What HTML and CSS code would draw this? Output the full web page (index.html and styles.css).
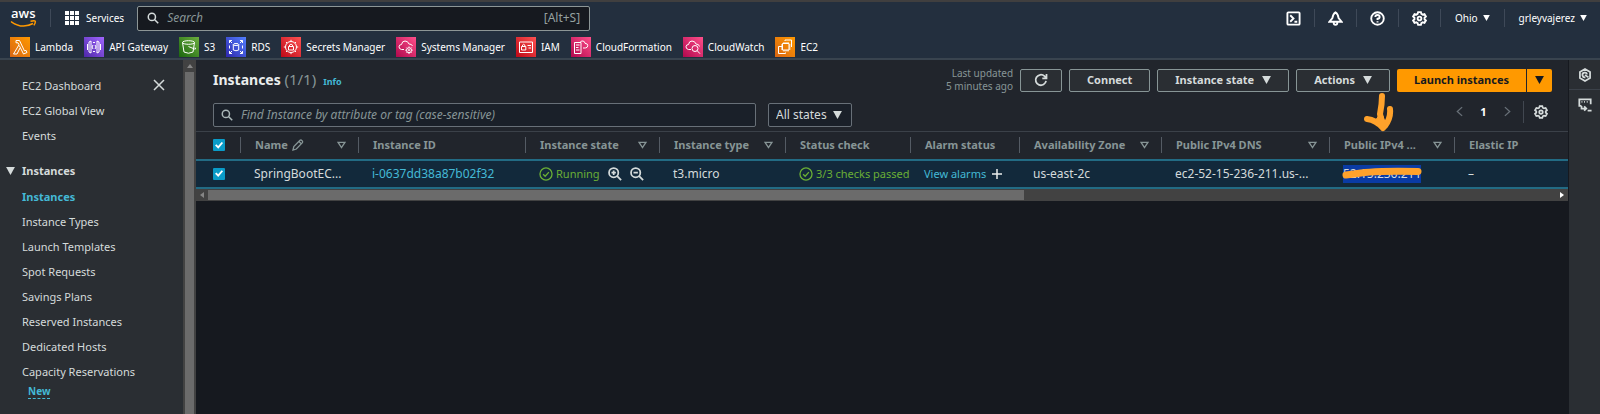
FILE: index.html
```html
<!DOCTYPE html>
<html lang="en">
<head>
<meta charset="utf-8">
<title>Instances | EC2</title>
<link rel="stylesheet" href="styles.css">
</head>
<body>
<svg class="defs" aria-hidden="true">
  <defs>
    <linearGradient id="g-orange" x1="0" y1="1" x2="1" y2="0"><stop offset="0" stop-color="#d86613"/><stop offset="1" stop-color="#f90"/></linearGradient>
    <linearGradient id="g-purple" x1="0" y1="1" x2="1" y2="0"><stop offset="0" stop-color="#4d27a8"/><stop offset="1" stop-color="#a166ff"/></linearGradient>
    <linearGradient id="g-green" x1="0" y1="1" x2="1" y2="0"><stop offset="0" stop-color="#1b660f"/><stop offset="1" stop-color="#6cae3e"/></linearGradient>
    <linearGradient id="g-blue" x1="0" y1="1" x2="1" y2="0"><stop offset="0" stop-color="#2e27ad"/><stop offset="1" stop-color="#527fff"/></linearGradient>
    <linearGradient id="g-red" x1="0" y1="1" x2="1" y2="0"><stop offset="0" stop-color="#bd0816"/><stop offset="1" stop-color="#ff5252"/></linearGradient>
    <linearGradient id="g-pink" x1="0" y1="1" x2="1" y2="0"><stop offset="0" stop-color="#b0084d"/><stop offset="1" stop-color="#ff4f8b"/></linearGradient>
    <symbol id="i-search" viewBox="0 0 16 16"><circle cx="6.5" cy="6.5" r="4.8"/><path d="M10 10l5 5"/></symbol>
    <symbol id="i-gear" viewBox="0 0 16 16"><path d="M6.500 1.200h3l.5 1.900 1.400.8 1.900-.5 1.500 2.500L13.400 7.200v1.600l1.400 1.300-1.500 2.500-1.900-.5-1.400.8-.5 1.900h-3L6 12.900l-1.400-.8-1.900.5-1.500-2.500L2.600 8.800V7.200L1.200 5.900l1.500-2.500 1.900.5L6 3.100z"/><circle cx="8" cy="8" r="2"/></symbol>
    <symbol id="i-down" viewBox="0 0 10 9"><path d="M0 0h10L5 9z"/></symbol>
    <symbol id="i-sort" viewBox="0 0 10 8"><path d="M1.200 1h7.600L5 6.800z"/></symbol>
    <symbol id="i-ok" viewBox="0 0 16 16"><circle cx="8" cy="8" r="6.900"/><path d="M4.700 8.200l2.400 2.300 4.200-4.600"/></symbol>
  </defs>
</svg>

<header class="topnav">
  <div class="nav-row">
    <a class="logo" href="#" aria-label="AWS home">
      <span class="logo-text">aws</span>
      <svg class="smile" viewBox="0 0 27 8"><path d="M1 1.500Q12 9.500 23 3.500" /><path d="M20.500 1.200q4.500-1 4.800.2.300 1.500-1.400 4"/></svg>
    </a>
    <button class="services" type="button">
      <svg class="grid-icon" viewBox="0 0 14 14"><path d="M0 0h4v4H0zM5 0h4v4H5zM10 0h4v4h-4zM0 5h4v4H0zM5 5h4v4H5zM10 5h4v4h-4zM0 10h4v4H0zM5 10h4v4H5zM10 10h4v4h-4z"/></svg>
      Services
    </button>
    <label class="search">
      <svg class="ic light"><use href="#i-search"/></svg>
      <input type="search" placeholder="Search" aria-label="Search">
      <span class="hint">[Alt+S]</span>
    </label>
    <div class="nav-tools">
      <button class="tool" type="button" aria-label="CloudShell"><svg class="ic" viewBox="0 0 16 16"><rect x="1.500" y="1.500" width="13" height="13" rx="1"/><path d="M4.500 4.500L8 8l-3.500 3.500M9 11.500h3"/></svg></button>
      <button class="tool" type="button" aria-label="Notifications"><svg class="ic" viewBox="0 0 16 16"><path d="M8 1.500c-2.500 1.500-3 4-3.300 6L1.500 11.500h13L11.300 7.500C11 5.500 10.500 3 8 1.500zM6 12q0 2.800 2 2.800T10 12"/></svg></button>
      <button class="tool" type="button" aria-label="Help"><svg class="ic" viewBox="0 0 16 16"><circle cx="8" cy="8" r="6.700"/><path d="M5.700 6.500q0-2.300 2.300-2.300t2.300 2.100Q10.300 8 8 8.300v1.200M8 10.800v1.500"/></svg></button>
      <button class="tool" type="button" aria-label="Settings"><svg class="ic"><use href="#i-gear"/></svg></button>
      <button type="button">Ohio <svg class="caret"><use href="#i-down"/></svg></button>
      <button type="button">grleyvajerez <svg class="caret"><use href="#i-down"/></svg></button>
    </div>
  </div>
  <nav class="favorites" aria-label="Favorites">
    <a href="#"><svg viewBox="0 0 20 20"><rect fill="url(#g-orange)" width="20" height="20"/><path d="M6 3.500h3.500l5 10.500 1.500-.7 1 2.200-3.500 1.500L9.300 8.500M6 3.500v2.300h2l1 2L3.500 17H7l3-6"/></svg>Lambda</a>
    <a href="#"><svg viewBox="0 0 20 20"><rect fill="url(#g-purple)" width="20" height="20"/><path d="M7 4L5 5v10l2 1zM13 4l2 1v10l-2 1zM3.500 7v6M16.500 7v6M9 8l-1 2 1 2M11 8l1 2-1 2M9 5.500h2M9 14.500h2"/></svg>API Gateway</a>
    <a href="#"><svg viewBox="0 0 20 20"><rect fill="url(#g-green)" width="20" height="20"/><ellipse cx="9.500" cy="5.500" rx="6" ry="1.800"/><path d="M3.500 5.500L5 15q4.500 2.500 9 0l1.500-9.500M9.500 9.500l6 2.500q2 .5.500-1.500"/></svg>S3</a>
    <a href="#"><svg viewBox="0 0 20 20"><rect fill="url(#g-blue)" width="20" height="20"/><ellipse cx="10" cy="7.500" rx="2.700" ry="1"/><path d="M7.300 7.500v5.500q2.700 1.500 5.400 0V7.500M3.500 6V3.500H6M3.500 3.500L6 6M14 3.500h2.500V6M16.500 3.500L14 6M3.500 14v2.500H6M3.500 16.500L6 14M14 16.500h2.500V14M16.500 16.500L14 14M3.500 8.500v3M16.500 8.500v3"/></svg>RDS</a>
    <a href="#"><svg viewBox="0 0 20 20"><rect fill="url(#g-red)" width="20" height="20"/><circle cx="10" cy="10" r="5.500"/><path d="M7.500 9.500h5v3.500h-5zM8.500 9.500V8q1.500-1.800 3 0v1.500M10 2.800v1.700M10 15.500v1.700M2.800 10h1.700M15.500 10h1.700M5 5l1 1M15 5l-1 1M5 15l1-1M15 15l-1-1"/></svg>Secrets Manager</a>
    <a href="#"><svg viewBox="0 0 20 20"><rect fill="url(#g-pink)" width="20" height="20"/><path d="M8 12.500H5.500Q3 12 3 9.800T5.500 7.500Q6 4 9 4t4 3q3 0 3.500 2"/><circle cx="13" cy="13.200" r="2.500"/><circle cx="13" cy="13.200" r=".7"/><path d="M13 9.500v1M13 16v1M9.300 13.200h1M15.700 13.200h1M10.400 10.600l.7.700M15 15.200l.7.700M10.400 15.900l.7-.7M15 11.200l.7-.7"/></svg>Systems Manager</a>
    <a href="#"><svg viewBox="0 0 20 20"><rect fill="url(#g-red)" width="20" height="20"/><path d="M3.500 5h13v10.500h-13zM5.500 9.500h4.300V13H5.500zM6.500 9.500V8q1.200-1.500 2.300 0v1.500M11.500 8.500H15M12.500 11H15"/></svg>IAM</a>
    <a href="#"><svg viewBox="0 0 20 20"><rect fill="url(#g-pink)" width="20" height="20"/><path d="M3.500 5.500h6.500v11H3.500zM5 8h3.500M5 10.500h2.500M5 13h3.500M9 5.500Q10 3.500 12 4t2 2.300q3 .2 2.800 2.500-.3 2-2.500 2.200H12"/></svg>CloudFormation</a>
    <a href="#"><svg viewBox="0 0 20 20"><rect fill="url(#g-pink)" width="20" height="20"/><path d="M8 12.500H5.500Q3 12 3 9.800T5.500 7.500Q6 4 9 4t4 3q3 0 3.500 2.500"/><circle cx="12" cy="11.500" r="3"/><path d="M14.200 13.700l2.800 3"/></svg>CloudWatch</a>
    <a href="#"><svg viewBox="0 0 20 20"><rect fill="url(#g-orange)" width="20" height="20"/><path d="M7.500 6.500h6.500v6.500H7.500zM9 6.500V5M11 6.500V5M13 6.500V5M9 14.500V13M11 14.500V13M13 14.500V13M7.500 8H6M7.500 10H6M7.500 12H6M15.500 8H14M15.500 10H14M15.500 12H14M10 4V3h6.500v7M7 9.500H3.500v7h7V15.500"/></svg>EC2</a>
  </nav>
</header>

<div class="layout">
  <aside class="sidebar">
    <nav class="side-nav" aria-label="EC2">
      <button class="close" type="button" aria-label="Close navigation"><svg viewBox="0 0 12 12"><path d="M1 1l10 10M11 1L1 11"/></svg></button>
      <ul>
        <li><a href="#">EC2 Dashboard</a></li>
        <li><a href="#">EC2 Global View</a></li>
        <li><a href="#">Events</a></li>
      </ul>
      <button class="group" type="button"><svg class="tri"><use href="#i-down"/></svg>Instances</button>
      <ul>
        <li><a class="active" href="#">Instances</a></li>
        <li><a href="#">Instance Types</a></li>
        <li><a href="#">Launch Templates</a></li>
        <li><a href="#">Spot Requests</a></li>
        <li><a href="#">Savings Plans</a></li>
        <li><a href="#">Reserved Instances</a></li>
        <li><a href="#">Dedicated Hosts</a></li>
        <li><a href="#">Capacity Reservations</a></li>
      </ul>
      <a class="new" href="#">New</a>
    </nav>
    <div class="vscroll"><svg viewBox="0 0 6 4"><path d="M0 4h6L3 0z"/></svg><div class="vthumb"></div></div>
  </aside>

  <main class="content">
    <section class="panel">
      <div class="title-row">
        <h1>Instances <span>(1/1)</span></h1>
        <a class="info" href="#">Info</a>
        <div class="actions">
          <p class="updated">Last updated<br>5 minutes ago</p>
          <button class="btn icon-btn" type="button" aria-label="Refresh"><svg class="ic" viewBox="0 0 16 16"><path d="M13.800 9A6 6 0 1 1 12 3.600L14 5.500M14.300 1v5H9.500"/></svg></button>
          <button class="btn" type="button">Connect</button>
          <button class="btn" type="button">Instance state <svg class="drop"><use href="#i-down"/></svg></button>
          <div class="action-anchor">
            <button class="btn" type="button">Actions <svg class="drop"><use href="#i-down"/></svg></button>
            <svg class="arrow-note" viewBox="0 0 30 42" aria-hidden="true"><path d="M18 4Q18 12 16 22L19 36M19 36Q12 28 3 27M26 17Q27 26 21 34"/><path class="fill" d="M16 22L11 29 18 38 22 33 19 24z"/></svg>
          </div>
          <div class="split">
            <button class="primary" type="button">Launch instances</button>
            <button class="primary more" type="button" aria-label="More launch options"><svg class="drop"><use href="#i-down"/></svg></button>
          </div>
        </div>
      </div>
      <div class="filter-row">
        <label class="filter">
          <svg class="ic"><use href="#i-search"/></svg>
          <input type="text" placeholder="Find Instance by attribute or tag (case-sensitive)" aria-label="Find Instance">
        </label>
        <div class="select-wrap">
          <select aria-label="Instance states"><option>All states</option></select>
          <svg class="drop"><use href="#i-down"/></svg>
        </div>
        <div class="pager">
          <button type="button" aria-label="Previous page"><svg class="chev" viewBox="0 0 8 12"><path d="M7 1L1.500 6 7 11"/></svg></button>
          <button class="page" type="button">1</button>
          <button type="button" aria-label="Next page"><svg class="chev" viewBox="0 0 8 12"><path d="M1 1l5.500 5L1 11"/></svg></button>
          <button class="prefs" type="button" aria-label="Preferences"><svg class="ic"><use href="#i-gear"/></svg></button>
        </div>
      </div>
      <table>
        <colgroup><col class="c-check"><col class="c-name"><col class="c-id"><col class="c-state"><col class="c-type"><col class="c-status"><col class="c-alarm"><col class="c-zone"><col class="c-dns"><col class="c-ip"><col></colgroup>
        <thead>
          <tr>
            <th><input type="checkbox" checked aria-label="Select all"></th>
            <th><div>Name <svg class="pencil" viewBox="0 0 12 12"><path d="M1 11l.8-3.500L8 1.300q1-.7 2 .3t.4 2L4.300 10zM7 2.500L9.500 5"/></svg><svg class="sort"><use href="#i-sort"/></svg></div></th>
            <th><div>Instance ID</div></th>
            <th><div>Instance state<svg class="sort"><use href="#i-sort"/></svg></div></th>
            <th><div>Instance type<svg class="sort"><use href="#i-sort"/></svg></div></th>
            <th><div>Status check</div></th>
            <th><div>Alarm status</div></th>
            <th><div>Availability Zone<svg class="sort"><use href="#i-sort"/></svg></div></th>
            <th><div>Public IPv4 DNS<svg class="sort"><use href="#i-sort"/></svg></div></th>
            <th><div>Public IPv4 ...<svg class="sort"><use href="#i-sort"/></svg></div></th>
            <th><div>Elastic IP</div></th>
          </tr>
        </thead>
        <tbody>
          <tr>
            <td><input type="checkbox" checked aria-label="Select SpringBootEC"></td>
            <td>SpringBootEC...</td>
            <td><a href="#">i-0637dd38a87b02f32</a></td>
            <td><div class="state"><svg class="ok"><use href="#i-ok"/></svg><span>Running</span>
              <button type="button" aria-label="Filter by value"><svg class="ic" viewBox="0 0 16 16"><circle cx="6.500" cy="6.500" r="5.300"/><path d="M10.500 10.500L15 15M4 6.500h5M6.500 4v5"/></svg></button>
              <button type="button" aria-label="Exclude value"><svg class="ic" viewBox="0 0 16 16"><circle cx="6.500" cy="6.500" r="5.300"/><path d="M10.500 10.500L15 15M4 6.500h5"/></svg></button></div></td>
            <td>t3.micro</td>
            <td><div class="state"><svg class="ok"><use href="#i-ok"/></svg><span>3/3 checks passed</span></div></td>
            <td><div class="alarm"><a href="#">View alarms</a><button type="button" aria-label="Add alarm"><svg viewBox="0 0 10 10"><path d="M5 0v10M0 5h10"/></svg></button></div></td>
            <td>us-east-2c</td>
            <td>ec2-52-15-236-211.us-...</td>
            <td><span class="marked">52.15.236.211<svg viewBox="0 0 80 12" aria-hidden="true"><path d="M4 8Q12 7 19 6T40 4.500 76 4.500"/></svg></span></td>
            <td>–</td>
          </tr>
        </tbody>
      </table>
      <div class="hscroll"><svg viewBox="0 0 4 6"><path d="M4 0v6L0 3z"/></svg><div class="htrack"><div class="hthumb"></div></div><svg class="on" viewBox="0 0 4 6"><path d="M0 0v6l4-3z"/></svg></div>
    </section>
  </main>

  <aside class="rail">
    <button type="button" aria-label="Info panel"><svg class="ic" viewBox="0 0 16 16"><path d="M8 1.200l5.800 3.300v7L8 14.800l-5.800-3.300v-7zM8 8l4 2.700"/><path d="M10.400 7.300a2.700 2.700 0 1 0-2 3.300"/></svg></button>
    <button type="button" aria-label="Command panel"><svg class="ic" viewBox="0 0 16 16"><path d="M4 9H1.500V1.500h13V7M4 4.300h1M7 4.300h1M10 4.300h1M4 9v3h5M7 9.500l2.500 2.500L7 14.500M11 14.500h4.500"/></svg></button>
  </aside>
</div>
</body>
</html>
```

FILE: styles.css
```css
* { box-sizing: border-box; }

body {
  margin: 0;
  min-height: 100vh;
  display: flex;
  flex-direction: column;
  background: #16191f;
  color: #d5dbdb;
  font-family: "Noto Sans", "Open Sans", sans-serif;
  font-size: 11px;
  line-height: 16px;
}

button, input, select { font: inherit; color: inherit; background: none; border: 0; padding: 0; margin: 0; }
button { display: inline-flex; align-items: center; justify-content: center; }
a { color: #44b9d6; text-decoration: none; }
ul { list-style: none; margin: 0; padding: 0; }
svg { display: block; flex: none; }
.defs { position: absolute; width: 0; height: 0; }

.ic { width: 14px; height: 14px; fill: none; stroke: currentColor; stroke-width: 2; }

/* Top navigation */
.topnav { background: #232f3e; border-top: 2px solid #403f3f; border-bottom: 2px solid #39444f; }
.nav-row { display: flex; align-items: center; height: 32px; color: #fff; font-size: 10px; }
.logo { width: 51px; height: 18px; padding-left: 10px; border-right: 1px solid #3e4958; color: #fff; }
.logo-text { display: block; height: 11px; padding-left: 1px; font: 600 13px/9px "Open Sans", sans-serif; }
.smile { width: 27px; height: 8px; fill: none; stroke: #f90; stroke-width: 1.5; }
.services { gap: 7px; padding: 0 13px 0 14px; }
.grid-icon { width: 14px; height: 14px; fill: #fff; }
.search { display: flex; align-items: center; gap: 8px; width: 453px; height: 25px; padding: 0 9px; background: #16191f; border: 1px solid #8d9696; border-radius: 2px; font-size: 12px; color: #95a0a0; }
.search .light { color: #d5dbdb; width: 12px; height: 12px; }
.search input { flex: 1; outline: 0; }
::placeholder { color: #879596; font-style: italic; opacity: 1; }
.nav-tools { display: flex; margin-left: auto; }
.nav-tools button { gap: 5px; height: 18px; padding: 0 14px; border-left: 1px solid #3e4958; }
.nav-tools .tool { padding: 0 13px; }
.nav-tools .ic { width: 15px; height: 15px; }
.nav-tools button:first-child { border-left: 0; }
.nav-tools button:last-child { padding-right: 13px; }
.caret { width: 7px; height: 6px; fill: #fff; }

.favorites { display: flex; gap: 11px; height: 24px; padding: 3px 10px 0; }
.favorites a { display: flex; align-items: center; gap: 5px; height: 20px; color: #fff; font-size: 10px; }
.favorites svg { width: 20px; height: 20px; }
.favorites path, .favorites circle, .favorites ellipse { fill: none; stroke: #fff; stroke-width: 1; }

/* Page frame */
.layout { flex: 1; display: flex; }
.sidebar { display: flex; width: 196px; background: #2a2e33; }
.side-nav { flex: 1; position: relative; padding: 13px 0 0; font-size: 11px; }
.side-nav li { height: 25px; padding-left: 22px; line-height: 25px; }
.side-nav li a { color: #d5dbdb; }
.side-nav li a.active { color: #44b9d6; font-weight: bold; }
.side-nav .close { position: absolute; right: 18px; top: 19px; }
.close svg { width: 12px; height: 12px; stroke: #d5dbdb; stroke-width: 1.5; }
.side-nav .group { height: 16px; margin: 15px 0 5px; padding-left: 6px; gap: 7px; font-weight: bold; }
.tri { width: 9px; height: 8px; fill: #d5dbdb; }
.new { display: block; width: fit-content; margin-left: 28px; font-size: 10px; font-weight: bold; line-height: 14px; border-bottom: 1px dashed #44b9d6; }
.vscroll { width: 13px; display: flex; flex-direction: column; align-items: center; background: #424242; }
.vscroll svg { width: 6px; height: 4px; margin: 4px 0; fill: #868686; }
.vthumb { flex: 1; width: 9px; background: #6b6b6b; }

.content { flex: 1; min-width: 0; }
.panel { background: #21252c; }
.title-row { display: flex; align-items: center; height: 40px; padding: 0 16px 0 17px; }
h1 { margin: 0 0 2px; font-size: 14px; line-height: 20px; color: #eaeded; }
h1 span { font-size: 15px; font-weight: normal; color: #879596; }
.info { margin: 3px 0 0 7px; font-size: 9px; font-weight: bold; }
.actions { display: flex; align-items: center; margin-left: auto; gap: 7px; }
.updated { margin: 0; text-align: right; font-size: 10px; line-height: 13px; color: #879596; }
.btn { height: 23px; padding: 0 17px; gap: 8px; background: #2a2e33; border: 1px solid #879596; border-radius: 2px; font-weight: bold; }
.icon-btn { padding: 0 13px; }
.drop { width: 9px; height: 8px; fill: currentColor; }
.action-anchor { position: relative; }
.arrow-note { position: absolute; z-index: 2; right: -4px; top: 23px; width: 30px; height: 42px; fill: none; stroke: #ffa22b; stroke-width: 6; stroke-linecap: round; stroke-linejoin: round; }
.arrow-note .fill { fill: #ffa22b; stroke-width: 1; }
.split { display: flex; gap: 1px; }
.primary { height: 23px; padding: 0 17px; background: #f90; color: #16191f; font-weight: bold; border-radius: 2px 0 0 2px; }
.more { padding: 0 8px; border-radius: 0 2px 2px 0; }

.filter-row { display: flex; align-items: center; height: 31px; padding: 0 17px 1px; }
.filter { display: flex; align-items: center; gap: 8px; width: 543px; height: 24px; padding: 0 7px; background: #1a2029; border: 1px solid #687078; border-radius: 2px; color: #aab7b8; font-size: 12px; }
.filter .ic { width: 12px; height: 12px; }
.filter input { flex: 1; outline: 0; }
.select-wrap { display: grid; align-items: center; margin-left: 12px; width: 84px; height: 24px; background: #1a2029; border: 1px solid #687078; border-radius: 2px; }
.select-wrap select { appearance: none; grid-area: 1 / 1; height: 22px; padding-left: 7px; font-size: 12px; }
.select-wrap .drop { grid-area: 1 / 1; justify-self: end; margin-right: 9px; pointer-events: none; }
.pager { display: flex; align-items: center; margin: 0 0 7px auto; padding-right: 3px; }
.chev { width: 7px; height: 11px; fill: none; stroke: #687078; stroke-width: 1.5; }
.page { width: 41px; font-weight: bold; color: #fff; }
.prefs { height: 22px; margin-left: 12px; padding-left: 10px; border-left: 1px solid #414750; }

/* Instances table */
table { width: 100%; table-layout: fixed; border-collapse: collapse; }
.c-check { width: 44px; } .c-name { width: 118px; } .c-id { width: 167px; } .c-state { width: 134px; }
.c-type { width: 126px; } .c-status { width: 125px; } .c-alarm { width: 109px; } .c-zone { width: 142px; }
.c-dns { width: 168px; } .c-ip { width: 125px; }
thead tr { border-top: 1px solid #3b4149; }
th { height: 28px; padding: 0; text-align: left; color: #879596; }
th div { display: flex; align-items: center; gap: 4px; height: 16px; padding: 0 12px 0 14px; border-left: 1px solid #545b64; white-space: nowrap; }
.sort { width: 9px; height: 8px; margin-left: auto; fill: none; stroke: #879596; stroke-width: 1.5; }
.pencil { width: 12px; height: 12px; fill: none; stroke: #879596; stroke-width: 1.3; }
tbody tr { background: #12293b; border: solid #226b84; border-width: 2px 0; }
td { height: 28px; padding: 0 0 0 14px; font-size: 12px; white-space: nowrap; overflow: hidden; }
th:first-child, td:first-child { padding: 0 0 0 17px; }
input[type="checkbox"] { appearance: none; display: block; width: 12px; height: 12px; background: #0a9bc7; border-radius: 1px; }
input[type="checkbox"]::before { content: ""; display: block; width: 12px; height: 12px; background: #fff; clip-path: polygon(17% 52%, 28% 42%, 43% 57%, 72% 22%, 84% 32%, 44% 80%); }
.state { display: flex; align-items: center; gap: 3px; font-size: 11px; color: #6aaf35; }
.ok { width: 14px; height: 14px; fill: none; stroke: #6aaf35; stroke-width: 1.5; }
.state button { margin-left: 5px; color: #d5dbdb; }
.alarm { display: flex; align-items: center; gap: 6px; font-size: 11px; }
.alarm svg { width: 10px; height: 10px; stroke: #eaeded; stroke-width: 1.5; }
.marked { display: inline-block; position: relative; background: #0a3ba5; line-height: 18px; }
.marked svg { position: absolute; left: -1px; top: 2px; width: 80px; height: 12px; fill: none; stroke: #ffa22b; stroke-width: 7; stroke-linecap: round; }
.hscroll { display: flex; align-items: center; height: 12px; padding: 0 4px; gap: 4px; background: #424242; }
.hscroll svg { width: 4px; height: 6px; fill: #868686; }
.hscroll .on { fill: #fff; }
.htrack { flex: 1; }
.hthumb { width: 60.5%; height: 10px; background: #6b6b6b; }

.rail { width: 32px; background: #2a2e33; border-left: 1px solid #16191f; color: #d5dbdb; }
.rail button { display: flex; width: 100%; height: 30px; border-bottom: 1px solid #3b4149; }
.rail button:last-child { border-bottom: 0; }
```
